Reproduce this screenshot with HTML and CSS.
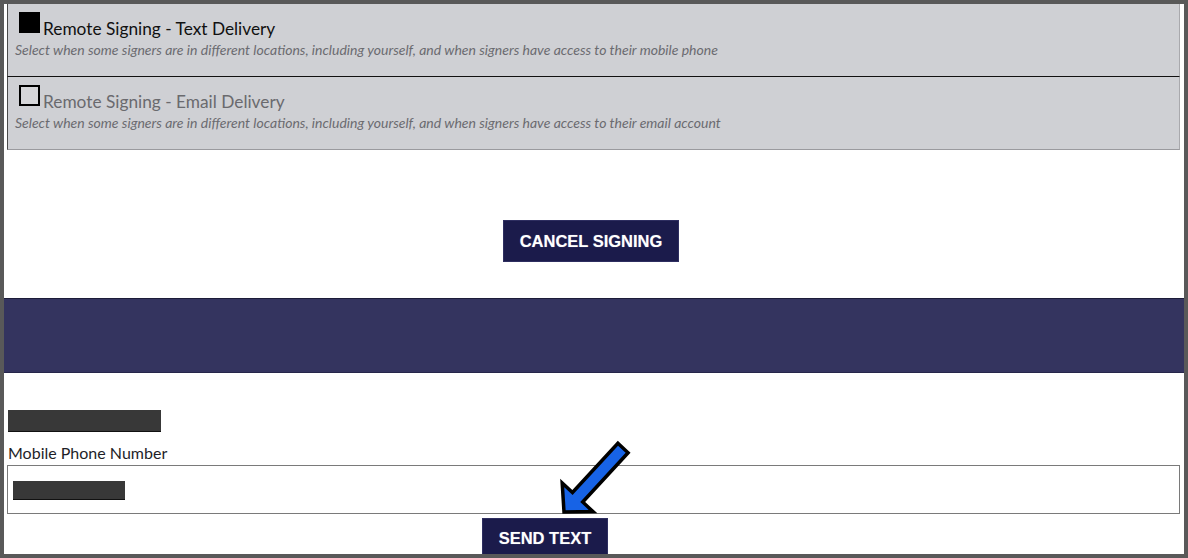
FILE: index.html
```html
<!DOCTYPE html>
<html lang="en">
<head>
<meta charset="utf-8">
<title>Remote Signing</title>
<link rel="stylesheet" href="styles.css">
</head>
<body>
<div class="frame">
  <div class="options">
    <div class="option option-first">
      <div class="opt-head">
        <span class="box box-checked"></span>
        <span class="opt-title">Remote Signing - Text Delivery</span>
      </div>
      <div class="opt-desc">Select when some signers are in different locations, including yourself, and when signers have access to their mobile phone</div>
    </div>
    <div class="option option-second">
      <div class="opt-head">
        <span class="box"></span>
        <span class="opt-title opt-title-muted">Remote Signing - Email Delivery</span>
      </div>
      <div class="opt-desc">Select when some signers are in different locations, including yourself, and when signers have access to their email account</div>
    </div>
  </div>

  <div class="cancel-row">
    <button class="btn btn-cancel">CANCEL SIGNING</button>
  </div>

  <div class="band"></div>

  <div class="form">
    <div class="redact redact-name"></div>
    <label class="field-label">Mobile Phone Number</label>
    <div class="input">
      <span class="redact redact-phone"></span>
    </div>
    <div class="send-row">
      <button class="btn btn-send">SEND TEXT</button>
    </div>
  </div>

  <svg class="arrow" width="1188" height="558" viewBox="0 0 1188 558" aria-hidden="true">
    <polygon points="617.9,443.2 628.1,452.8 582.7,502.0 593.0,511.6 564,512 562.2,483.0 572.5,492.5"
      fill="#1763e6" stroke="#000" stroke-width="3.5" stroke-linejoin="miter"/>
  </svg>
</div>
</body>
</html>
```

FILE: styles.css
```css
* { box-sizing: border-box; }

html, body {
  margin: 0;
  padding: 0;
  background: #595959;
}

.frame {
  position: relative;
  width: 1188px;
  height: 558px;
  border: 4px solid #595959;
  background: #ffffff;
  overflow: hidden;
  font-family: Lato, "Open Sans", sans-serif;
}

.options {
  margin: 0 4px 0 3px;
}

.option {
  background: #cfd0d4;
  border-left: 1px solid #4a4a4a;
  border-right: 1px solid #a9a9ad;
  padding: 8px 0 0 7px;
}

.option-first {
  height: 72px;
}

.option-second {
  height: 74px;
  border-top: 1px solid #111;
  border-bottom: 1px solid #9a9a9e;
}

.opt-head {
  display: flex;
  align-items: flex-start;
  margin-left: 4px;
}

.box {
  width: 21px;
  height: 21px;
  flex: none;
  border: 2px solid #000;
  background: #d6d6d9;
}

.box-checked {
  background: #000;
}

.opt-title {
  margin-top: 6px;
  margin-left: 3px;
  font-size: 17.3px;
  line-height: 21px;
  color: #111;
}

.opt-title-muted {
  color: #6a6a6e;
}

.opt-desc {
  margin-top: 2px;
  font-size: 14px;
  line-height: 17px;
  font-style: italic;
  color: #6b6b70;
  white-space: nowrap;
}

.cancel-row {
  display: flex;
  justify-content: center;
  padding: 70px 6px 0 0;
  height: 148px;
}

.btn {
  font-family: "Liberation Sans", Arial, sans-serif;
  font-weight: bold;
  font-size: 16.5px;
  color: #ffffff;
  background: #1b1b4b;
  border: 1px solid #2e2e60;
  height: 42px;
  padding: 0;
  text-align: center;
  white-space: nowrap;
  text-shadow: 0 0 1px rgba(255,255,255,0.4);
  cursor: pointer;
}

.btn-cancel {
  width: 176px;
}

.band {
  height: 75px;
  background: #34345f;
  border-top: 1px solid #1c1c38;
  border-bottom: 1px solid #26264a;
}

.form {
  padding: 37px 4px 0 3px;
}

.redact {
  display: block;
  background: #383838;
  border-bottom: 1px solid #111;
}

.redact-name {
  width: 153px;
  height: 22px;
  margin-left: 1px;
}

.field-label {
  display: block;
  margin: 10px 0 0 1px;
  font-size: 16px;
  line-height: 22px;
  color: #1e1e28;
}

.input {
  margin-top: 1px;
  height: 49px;
  border: 1px solid #7a7a7a;
  padding: 15px 0 0 5px;
}

.redact-phone {
  width: 112px;
  height: 19px;
}

.send-row {
  padding: 4px 0 0 475px;
}

.btn-send {
  width: 126px;
  height: 44px;
  padding-bottom: 4px;
}

.arrow {
  position: absolute;
  left: -4px;
  top: -4px;
  pointer-events: none;
}
```
